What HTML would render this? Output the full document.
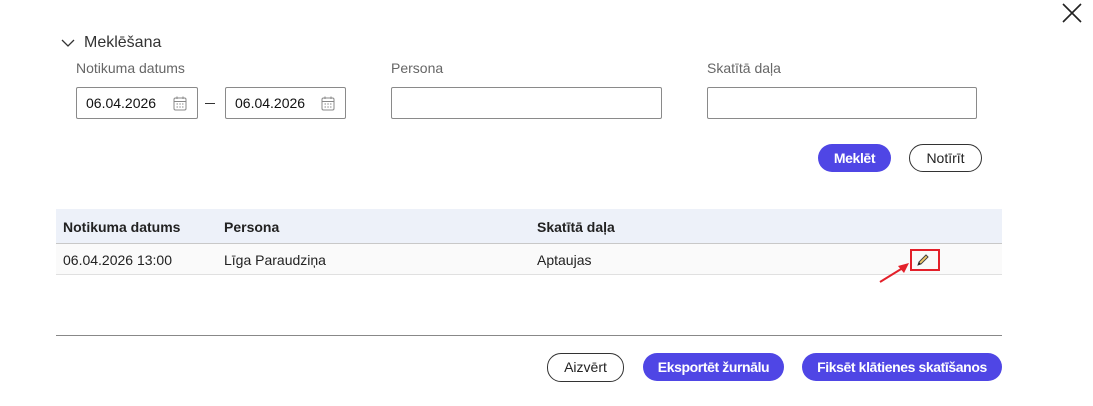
<!DOCTYPE html>
<html><head><meta charset="utf-8"><style>
*{box-sizing:border-box;margin:0;padding:0}
body{width:1093px;height:406px;background:#fff;font-family:"Liberation Sans",sans-serif;color:#222;position:relative;overflow:hidden}
.a{position:absolute}
.lbl{font-size:14px;color:#666}
.inp{border:1px solid #8a8a8a;border-radius:2px;height:32px;background:#fff}
.date{font-size:14px;color:#111;padding:7px 0 0 9px}
.btn{position:absolute;border-radius:14px;font-size:14px;font-weight:bold;text-align:center;line-height:28px;height:28px;letter-spacing:-0.4px}
.p{background:#4f46e5;color:#fff}
.o{border:1px solid #333;color:#222;font-weight:normal;line-height:26px;letter-spacing:0}
.cal{position:absolute;right:10px;top:8px}
</style></head><body>
<svg class="a" style="left:1061px;top:2px" width="22" height="22"><path d="M2 2L20 20M20 2L2 20" stroke="#222" stroke-width="1.6"/></svg>
<svg class="a" style="left:61px;top:38px" width="14" height="10"><path d="M1 2L7 8L13 2" stroke="#333" fill="none" stroke-width="1.3"/></svg>
<div class="a" style="left:84px;top:34px;font-size:16px;color:#333">Meklēšana</div>
<div class="a lbl" style="left:76px;top:60px">Notikuma datums</div>
<div class="a lbl" style="left:391px;top:60px">Persona</div>
<div class="a lbl" style="left:707px;top:60px">Skatītā daļa</div>
<div class="a inp" style="left:76px;top:87px;width:122px"><div class="date">06.04.2026</div>
<svg class="cal" width="14" height="15"><rect x="1" y="2" width="12" height="12" rx="1.5" fill="none" stroke="#888"/><path d="M1 5.5H13M4 0.5V3M10 0.5V3" stroke="#888"/><path d="M3.5 8h1.5M6.3 8h1.5M9 8h1.5M3.5 11h1.5M6.3 11h1.5M9 11h1.5" stroke="#888"/></svg></div>
<div class="a" style="left:205px;top:103px;width:10px;border-top:1px solid #333"></div>
<div class="a inp" style="left:225px;top:87px;width:121px"><div class="date">06.04.2026</div>
<svg class="cal" width="14" height="15"><rect x="1" y="2" width="12" height="12" rx="1.5" fill="none" stroke="#888"/><path d="M1 5.5H13M4 0.5V3M10 0.5V3" stroke="#888"/><path d="M3.5 8h1.5M6.3 8h1.5M9 8h1.5M3.5 11h1.5M6.3 11h1.5M9 11h1.5" stroke="#888"/></svg></div>
<div class="a inp" style="left:391px;top:87px;width:271px"></div>
<div class="a inp" style="left:707px;top:87px;width:270px"></div>
<div class="btn p" style="left:818px;top:144px;width:73px">Meklēt</div>
<div class="btn o" style="left:909px;top:144px;width:73px">Notīrīt</div>
<div class="a" style="left:56px;top:209px;width:946px;height:35px;background:#edf1f9;border-bottom:1px solid #c8c8c8"></div>
<div class="a" style="left:56px;top:244px;width:946px;height:31px;background:#fafafa;border-bottom:1px solid #e0e0e0"></div>
<div class="a" style="left:63px;top:219px;font-size:14px;font-weight:bold">Notikuma datums</div>
<div class="a" style="left:224px;top:219px;font-size:14px;font-weight:bold">Persona</div>
<div class="a" style="left:537px;top:219px;font-size:14px;font-weight:bold">Skatītā daļa</div>
<div class="a" style="left:63px;top:252px;font-size:14px">06.04.2026 13:00</div>
<div class="a" style="left:224px;top:252px;font-size:14px">Līga Paraudziņa</div>
<div class="a" style="left:537px;top:252px;font-size:14px">Aptaujas</div>
<div class="a" style="left:910px;top:249px;width:30px;height:22px;border:2px solid #e3202a"></div>
<svg class="a" style="left:916px;top:253px" width="14" height="14"><path d="M2 12L3 9L10 2L12 4L5 11Z" fill="#f2c96b" stroke="#444" stroke-width="1"/><path d="M2 12L3 9L5 11Z" fill="#222"/></svg>
<svg class="a" style="left:876px;top:258px" width="36" height="28"><path d="M4 24L30 8" stroke="#e3202a" stroke-width="2"/><path d="M33 5L22 8L28 15Z" fill="#e3202a"/></svg>
<div class="a" style="left:56px;top:335px;width:946px;border-top:1px solid #888"></div>
<div class="btn o" style="left:547px;top:353px;width:77px;height:29px;line-height:27px">Aizvērt</div>
<div class="btn p" style="left:643px;top:353px;width:141px;height:28px">Eksportēt žurnālu</div>
<div class="btn p" style="left:802px;top:353px;width:200px;height:28px">Fiksēt klātienes skatīšanos</div>
</body></html>
